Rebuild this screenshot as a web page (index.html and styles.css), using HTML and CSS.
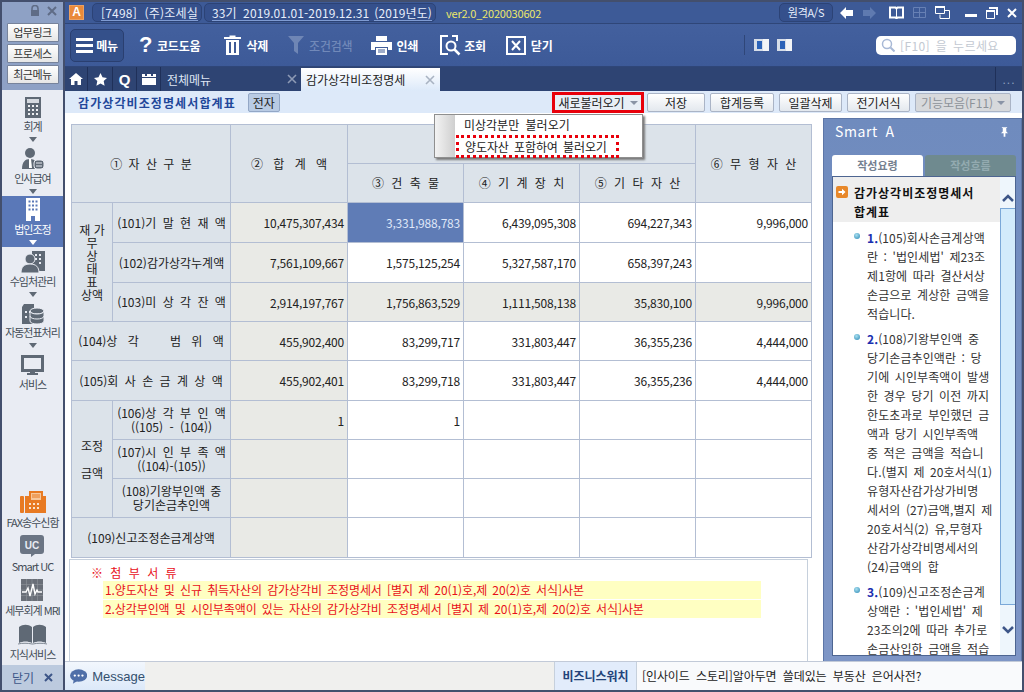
FILE: index.html
```html
<!DOCTYPE html>
<html lang="ko">
<head>
<meta charset="utf-8">
<title>감가상각비조정명세서합계표</title>
<link rel="stylesheet" href="styles.css">
</head>
<body>
<div class="window">
  <aside class="side">
    <div class="side-top">
      <div class="side-ctrl">
        <svg width="10" height="11" viewBox="0 0 10 11"><path d="M2 5V3.5a3 3 0 0 1 6 0V5" fill="none" stroke="#5f6c86" stroke-width="1.6"/><rect x="1" y="5" width="8" height="6" fill="#5f6c86"/></svg>
        <svg width="10" height="10" viewBox="0 0 10 10"><path d="M1 1l8 8M9 1l-8 8" stroke="#5f6c86" stroke-width="2"/></svg>
      </div>
      <button class="side-btn">업무링크</button>
      <button class="side-btn">프로세스</button>
      <button class="side-btn">최근메뉴</button>
    </div>
    <nav class="side-nav">
      <div class="nav-item">
        <svg class="nav-ico" width="16" height="21" viewBox="0 0 16 21"><rect width="16" height="21" fill="#5f6975"/><rect x="2" y="2" width="12" height="4" fill="#d5d9df"/><path d="M3 8h2v2H3zM7 8h2v2H7zM11 8h2v2h-2zM3 12h2v2H3zM7 12h2v2H7zM11 12h2v2h-2zM3 16h2v2H3zM7 16h2v2H7zM11 16h2v2h-2z" fill="#eef0f3"/></svg>
        <span class="nav-label">회계</span><i class="nav-arrow"></i>
      </div>
      <div class="nav-item">
        <svg class="nav-ico" width="24" height="22" viewBox="0 0 24 22"><circle cx="9" cy="5" r="5" fill="#5f6975"/><path d="M1 21c0-7 3-10 8-10s7 3 7 10z" fill="#5f6975"/><path d="M8 11h2l1 9H8z" fill="#fff"/><rect x="13" y="12" width="10" height="9" rx="3" fill="#5f6975" stroke="#e9ecf3"/><path d="M15 15h6M15 18h6" stroke="#e9ecf3"/></svg>
        <span class="nav-label">인사급여</span><i class="nav-arrow"></i>
      </div>
      <div class="nav-item nav-on">
        <svg class="nav-ico" width="16" height="23" viewBox="0 0 16 23"><path d="M1 0h14v23h-5v-5H6v5H1z" fill="#fff"/><path d="M3.500 2.500h2v2h-2zM7 2.500h2v2H7zM10.500 2.500h2v2h-2zM3.500 6.500h2v2h-2zM7 6.500h2v2H7zM10.500 6.500h2v2h-2zM3.500 10.500h2v2h-2zM7 10.500h2v2H7zM10.500 10.500h2v2h-2z" fill="#5a78b8"/></svg>
        <span class="nav-label">법인조정</span><i class="nav-arrow"></i>
      </div>
      <div class="nav-item">
        <svg class="nav-ico" width="24" height="22" viewBox="0 0 24 22"><path d="M11 0h13v20H11z" fill="#5f6975"/><path d="M14 3h2v2h-2zM18 3h2v2h-2zM14 7h2v2h-2zM18 7h2v2h-2zM18 11h2v2h-2z" fill="#e9ecf3"/><circle cx="9" cy="8" r="5" fill="#5f6975" stroke="#e9ecf3"/><path d="M0 22c0-6 3-9 9-9s9 3 9 9z" fill="#5f6975" stroke="#e9ecf3"/></svg>
        <span class="nav-label">수임처관리</span><i class="nav-arrow"></i>
      </div>
      <div class="nav-item">
        <svg class="nav-ico" width="24" height="20" viewBox="0 0 24 20"><path d="M1 3l2-3h10v20H1z" fill="#5f6975"/><path d="M4 7h2v2H4zM8 7h2v2H8zM4 12h2v2H4z" fill="#e9ecf3"/><ellipse cx="16" cy="7" rx="7" ry="3" fill="#5f6975" stroke="#e9ecf3"/><path d="M9 7v10c0 4 14 4 14 0V7c0 4-14 4-14 0z" fill="#5f6975" stroke="#e9ecf3"/><path d="M9 12c0 4 14 4 14 0" fill="none" stroke="#e9ecf3"/></svg>
        <span class="nav-label">자동전표처리</span><i class="nav-arrow"></i>
      </div>
      <div class="nav-item">
        <svg class="nav-ico" width="23" height="21" viewBox="0 0 23 21"><rect x="1.500" y="1.500" width="20" height="14" fill="#e9ecf3" stroke="#5f6975" stroke-width="3"/><path d="M9 16h5v2h3v2H6v-2h3z" fill="#5f6975"/></svg>
        <span class="nav-label">서비스</span>
      </div>
    </nav>
    <div class="side-tools">
      <div class="tool">
        <svg width="26" height="22" viewBox="0 0 26 22"><rect y="5" width="4" height="17" rx="1" fill="#e87a22"/><path d="M5 5h4V0h14v5h3v17H5z" fill="#e87a22"/><path d="M11 2h10v7H11z" fill="#f7c79a"/><path d="M12 4h8M12 6h8" stroke="#e87a22"/><path d="M9 12h2v2H9zM13 12h2v2h-2zM17 12h2v2h-2zM9 16h2v2H9zM13 16h2v2h-2zM17 16h2v2h-2z" fill="#fbe3cd"/></svg>
        <span class="tool-label">FAX송수신함</span>
      </div>
      <div class="tool">
        <svg width="24" height="22" viewBox="0 0 24 22"><path d="M3 0h18a3 3 0 0 1 3 3v13a3 3 0 0 1-3 3h-6l-4 3v-3H3a3 3 0 0 1-3-3V3a3 3 0 0 1 3-3z" fill="#6b7584"/><text x="12" y="13.500" class="uc-text">UC</text></svg>
        <span class="tool-label">Smart UC</span>
      </div>
      <div class="tool">
        <svg width="22" height="22" viewBox="0 0 22 22"><rect width="22" height="22" fill="#6a6f78"/><path d="M0 5.500h22M0 11h22M0 16.500h22M5.500 0v22M11 0v22M16.500 0v22" stroke="#8e939b" stroke-width=".6"/><path d="M1 13h4l2-4 2 8 3-12 2 10 2-4 1 2h4" fill="none" stroke="#fff" stroke-width="1.400"/></svg>
        <span class="tool-label">세무회계 MRI</span>
      </div>
      <div class="tool">
        <svg width="29" height="21" viewBox="0 0 29 21"><path d="M1 3c4-3 9-3 13 0v16c-4-2-9-2-13 0zM15 3c4-3 9-3 13 0v16c-4-2-9-2-13 0z" fill="#5f6975"/><path d="M0 20c4-1 10-1 14 0h1c4-1 10-1 14 0" fill="none" stroke="#7f8893"/></svg>
        <span class="tool-label">지식서비스</span>
      </div>
    </div>
    <div class="side-close"><span>닫기</span><svg width="9" height="9" viewBox="0 0 9 9"><path d="M1 1l7 7M8 1L1 8" stroke="#3d5688" stroke-width="2"/></svg></div>
  </aside>

  <main class="main">
    <header class="titlebar">
      <span class="logo">A</span>
      <span class="chip chip-a"><u>[7498] (주)조세실</u></span>
      <span class="chip chip-b"><u>33기 2019.01.01-2019.12.31</u> <u>(2019년도)</u></span>
      <span class="version">ver2.0_2020030602</span>
      <div class="title-right">
        <span class="chip chip-r">원격A/S</span>
        <svg width="14" height="12" viewBox="0 0 14 12"><path d="M0 6l6-6v3h7v6H6v3z" fill="#fff"/></svg>
        <svg class="after-back" width="13" height="12" viewBox="0 0 13 12"><path d="M13 6L7 0v3H0v6h7v3z" fill="#5f7ab0"/></svg>
        <svg class="after-fwd" width="15" height="13" viewBox="0 0 15 13"><path d="M1 1.500h5.500l1 1 1-1H14v10H8.500l-1 1-1-1H1z" fill="none" stroke="#fff" stroke-width="2"/><path d="M7.500 2v10" stroke="#fff"/></svg>
        <svg width="13" height="11" viewBox="0 0 13 11"><path d="M.5.500h12v10H.5zM.5 5.500h12M6.500.500v10" fill="none" stroke="#6780b4"/></svg>
        <svg width="15" height="13" viewBox="0 0 15 13"><path d="M.5.500h9v7h-9zM5 8.500v4h9.500v-8H10" fill="none" stroke="#fff"/><path d="M0 0h10v2H0z" fill="#fff"/></svg>
        <svg class="win-min" width="12" height="3" viewBox="0 0 12 3"><rect width="12" height="3" fill="#fff"/></svg>
        <svg width="12" height="12" viewBox="0 0 12 12"><path d="M3 0h9v8h-2V2H3z" fill="#fff"/><path d="M.5 3.500h8v8h-8z" fill="none" stroke="#fff"/><path d="M0 3h9v2H0z" fill="#fff"/></svg>
        <svg width="10" height="10" viewBox="0 0 10 10"><path d="M1 1l8 8M9 1L1 9" stroke="#fff" stroke-width="2"/></svg>
      </div>
    </header>

    <div class="toolbar">
      <button class="tb-menu">
        <svg width="17" height="15" viewBox="0 0 17 15"><path d="M0 0h17v3H0zM0 6h17v3H0zM0 12h17v3H0z" fill="#fff"/></svg>
        <b>메뉴</b>
      </button>
      <div class="tb-item tb-code"><span class="q">?</span><b>코드도움</b></div>
      <div class="tb-item tb-del">
        <svg width="17" height="20" viewBox="0 0 17 20"><path d="M5.500 2V.5h6V2H17v2H0V2z" fill="#fff"/><path d="M2 5h13v15H2z" fill="#fff"/><path d="M5 7h2v11H5zM10 7h2v11h-2z" fill="#3f5a95"/></svg>
        <b>삭제</b>
      </div>
      <div class="tb-item tb-off tb-find">
        <svg width="16" height="18" viewBox="0 0 16 18"><path d="M0 0h16l-6 7v11l-4-3V7z" fill="#6f86b5"/></svg>
        <b>조건검색</b>
      </div>
      <div class="tb-item tb-print">
        <svg width="21" height="19" viewBox="0 0 21 19"><path d="M5 0h11v5H5z" fill="#fff"/><path d="M0 6h21v8h-4v-3H4v3H0z" fill="#fff"/><path d="M5 12h11v7H5z" fill="#fff"/><path d="M7 14h7M7 16h7" stroke="#3f5a95"/></svg>
        <b>인쇄</b>
      </div>
      <div class="tb-item tb-view">
        <svg width="21" height="21" viewBox="0 0 21 21"><path d="M8 1H1v18h7M12 1h5v5" fill="none" stroke="#fff" stroke-width="2"/><circle cx="11" cy="11" r="4.500" fill="none" stroke="#fff" stroke-width="2"/><path d="M14.500 14.500l5 5" stroke="#fff" stroke-width="2.500"/></svg>
        <b>조회</b>
      </div>
      <div class="tb-item tb-close">
        <svg width="20" height="19" viewBox="0 0 20 19"><rect x="1" y="1" width="18" height="17" fill="none" stroke="#fff" stroke-width="2"/><path d="M6 5l8 9M14 5l-8 9" stroke="#fff" stroke-width="2"/></svg>
        <b>닫기</b>
      </div>
      <div class="tb-right">
        <i class="tb-sep"></i>
        <span class="mini"><i></i></span>
        <span class="mini"><i></i></span>
        <div class="search">
          <svg width="14" height="14" viewBox="0 0 14 14"><circle cx="6" cy="6" r="4.500" fill="none" stroke="#a8b9d6" stroke-width="1.500"/><path d="M9.500 9.500l4 4" stroke="#a8b9d6" stroke-width="2"/></svg>
          <span>[F10] 을 누르세요</span>
        </div>
      </div>
    </div>

    <div class="tabbar">
      <span class="tab-ico">
        <svg width="14" height="12" viewBox="0 0 14 12"><path d="M7 0l7 6h-2v6H8.500V8h-3v4H2V6H0z" fill="#fff"/></svg>
      </span>
      <span class="tab-ico tab-ico-b">
        <svg width="13" height="13" viewBox="0 0 13 13"><path d="M6.500 0l2 4.300 4.500.6-3.300 3.100.9 4.700-4.100-2.300-4.100 2.300.9-4.700L0 4.900l4.500-.6z" fill="#fff"/></svg>
      </span>
      <span class="tab-ico tab-ico-q">Q</span>
      <span class="tab-ico">
        <svg width="14" height="11" viewBox="0 0 14 11"><path d="M0 0h3v2h2V0h4v2h2V0h3v3H0zM0 4h14v7H0z" fill="#fff"/></svg>
      </span>
      <div class="tab tab-all"><span>전체메뉴</span><svg width="10" height="10" viewBox="0 0 10 10"><path d="M1 1l8 8M9 1L1 9" stroke="#8d9ab5" stroke-width="1.600"/></svg></div>
      <div class="tab tab-on"><span>감가상각비조정명세</span><svg width="10" height="10" viewBox="0 0 10 10"><path d="M1 1l8 8M9 1L1 9" stroke="#a9b3c2" stroke-width="1.600"/></svg></div>
      <div class="tab-more">...</div>
    </div>

    <div class="subbar">
      <h1 class="page-title">감가상각비조정명세서합계표</h1>
      <button class="btn btn-e">전자</button>
      <div class="sub-actions">
        <div class="load-wrap">
          <button class="btn btn-load">새로불러오기<i class="caret"></i></button>
          <div class="dropdown">
            <div class="dd-row">미상각분만 불러오기</div>
            <div class="dd-row dd-mark">양도자산 포함하여 불러오기</div>
          </div>
        </div>
        <button class="btn btn-save">저장</button>
        <button class="btn btn-sum">합계등록</button>
        <button class="btn btn-w">일괄삭제</button>
        <button class="btn btn-w">전기서식</button>
        <button class="btn btn-fn">기능모음(F11)<i class="caret"></i></button>
      </div>
    </div>

    <div class="body">
      <section class="work">
        <table class="grid">
          <colgroup><col class="c1"><col class="c2"><col class="c3"><col class="c4"><col class="c4"><col class="c4"><col class="c4"></colgroup>
          <tr class="h39">
            <th colspan="2" rowspan="2" class="wide">① 자 산 구 분</th>
            <th rowspan="2" class="widest">② 합 계 액</th>
            <th colspan="3"></th>
            <th rowspan="2" class="wider">⑥ 무 형 자 산</th>
          </tr>
          <tr class="h39">
            <th class="wider">③ 건 축 물</th>
            <th class="wider">④ 기 계 장 치</th>
            <th class="wider">⑤ 기 타 자 산</th>
          </tr>
          <tr class="h40">
            <th rowspan="3" class="stack">재 가<br>무<br>상<br>태<br>표<br>상액</th>
            <th class="wide">(101)기 말 현 재 액</th>
            <td class="num gray">10,475,307,434</td>
            <td class="num sel">3,331,988,783</td>
            <td class="num">6,439,095,308</td>
            <td class="num">694,227,343</td>
            <td class="num">9,996,000</td>
          </tr>
          <tr class="h40">
            <th>(102)감가상각누계액</th>
            <td class="num gray">7,561,109,667</td>
            <td class="num">1,575,125,254</td>
            <td class="num">5,327,587,170</td>
            <td class="num">658,397,243</td>
            <td class="num"></td>
          </tr>
          <tr class="h39">
            <th class="wide">(103)미 상 각 잔 액</th>
            <td class="num gray">2,914,197,767</td>
            <td class="num gray">1,756,863,529</td>
            <td class="num gray">1,111,508,138</td>
            <td class="num gray">35,830,100</td>
            <td class="num gray">9,996,000</td>
          </tr>
          <tr class="h39">
            <th colspan="2" class="widest">(104)상 각 &nbsp; 범 위 액</th>
            <td class="num gray">455,902,400</td>
            <td class="num">83,299,717</td>
            <td class="num">331,803,447</td>
            <td class="num">36,355,236</td>
            <td class="num">4,444,000</td>
          </tr>
          <tr class="h40">
            <th colspan="2" class="wide">(105)회 사 손 금 계 상 액</th>
            <td class="num gray">455,902,401</td>
            <td class="num">83,299,718</td>
            <td class="num">331,803,447</td>
            <td class="num">36,355,236</td>
            <td class="num">4,444,000</td>
          </tr>
          <tr class="h39">
            <th rowspan="3" class="adj">조정<br>금액</th>
            <th class="two wide">(106)상 각 부 인 액<br>((105) - (104))</th>
            <td class="num gray">1</td>
            <td class="num">1</td>
            <td class="num"></td><td class="num"></td><td class="num"></td>
          </tr>
          <tr class="h39">
            <th class="two wide">(107)시 인 부 족 액<br>((104)-(105))</th>
            <td class="num gray"></td>
            <td class="num"></td><td class="num"></td><td class="num"></td><td class="num"></td>
          </tr>
          <tr class="h39">
            <th class="two">(108)기왕부인액 중<br>당기손금추인액</th>
            <td class="num gray"></td>
            <td class="num"></td><td class="num"></td><td class="num"></td><td class="num"></td>
          </tr>
          <tr class="h40">
            <th colspan="2">(109)신고조정손금계상액</th>
            <td class="num gray"></td>
            <td class="num"></td><td class="num"></td><td class="num"></td><td class="num"></td>
          </tr>
        </table>
        <div class="memo">
          <p class="memo-head">※ 첨 부 서 류</p>
          <p class="memo-line">1.양도자산 및 신규 취득자산의 감가상각비 조정명세서 [별지 제 20(1)호,제 20(2)호 서식]사본</p>
          <p class="memo-line">2.상각부인액 및 시인부족액이 있는 자산의 감가상각비 조정명세서 [별지 제 20(1)호,제 20(2)호 서식]사본</p>
        </div>
      </section>

      <aside class="smart">
        <div class="smart-head"><span>Smart A</span>
          <svg width="7" height="10" viewBox="0 0 8 11"><path d="M1 0h6v1H6v4l2 2H5v4H3V7H0l2-2V1H1z" fill="#fff"/></svg>
        </div>
        <div class="smart-tabs">
          <span class="st st-on">작성요령</span>
          <span class="st st-off">작성흐름</span>
        </div>
        <div class="smart-box">
          <div class="smart-text">
            <div class="smart-title">
              <svg width="12" height="12" viewBox="0 0 12 12"><rect width="12" height="12" rx="2" fill="#e8882a"/><path d="M2.500 5h3.500V2.800L9.500 6 6 9.200V7H2.500z" fill="#fff"/></svg>
              <strong>감가상각비조정명세서<br>합계표</strong>
            </div>
            <div class="guide"><i class="dot"></i><p><b>1.</b>(105)회사손금계상액<br>란 : '법인세법' 제23조<br>제1항에 따라 결산서상<br>손금으로 계상한 금액을<br>적습니다.</p></div>
            <div class="guide"><i class="dot"></i><p><b>2.</b>(108)기왕부인액 중<br>당기손금추인액란 : 당<br>기에 시인부족액이 발생<br>한 경우 당기 이전 까지<br>한도초과로 부인했던 금<br>액과 당기 시인부족액<br>중 적은 금액을 적습니<br>다.(별지 제 20호서식(1)<br>유형자산감가상가비명<br>세서의 (27)금액,별지 제<br>20호서식(2) 유,무형자<br>산감가상각비명세서의<br>(24)금액의 합</p></div>
            <div class="guide"><i class="dot"></i><p><b>3.</b>(109)신고조정손금계<br>상액란 : '법인세법' 제<br>23조의2에 따라 추가로<br>손금산입한 금액을 적습</p></div>
          </div>
          <div class="scroll">
            <div class="sc-up"><svg width="12" height="8" viewBox="0 0 12 8"><path d="M1 7l5-5 5 5" fill="none" stroke="#3d5688" stroke-width="2.500"/></svg></div>
            <div class="sc-thumb"></div>
            <div class="sc-down"><svg width="12" height="8" viewBox="0 0 12 8"><path d="M1 1l5 5 5-5" fill="none" stroke="#3d5688" stroke-width="2.500"/></svg></div>
          </div>
        </div>
      </aside>
    </div>

    <footer class="status">
      <div class="msg">
        <svg width="18" height="15" viewBox="0 0 18 15"><ellipse cx="9" cy="6.500" rx="9" ry="6.500" fill="#4f6fa8"/><path d="M4 11l-1 4 5-3z" fill="#4f6fa8"/><circle cx="5" cy="6.500" r="1.200" fill="#fff"/><circle cx="9" cy="6.500" r="1.200" fill="#fff"/><circle cx="13" cy="6.500" r="1.200" fill="#fff"/></svg>
        <span>Message</span>
      </div>
      <div class="status-fill"></div>
      <div class="biz">비즈니스워치</div>
      <div class="news">[인사이드 스토리]알아두면 쓸데있는 부동산 은어사전?</div>
    </footer>
  </main>
</div>
</body>
</html>
```
FILE: styles.css
```css
* { box-sizing: border-box; }
html, body { margin: 0; height: 692px; overflow: hidden; }
body {
  font-family: "Noto Sans CJK KR", "Liberation Sans", sans-serif;
  font-size: 12px;
  word-spacing: 2px;
  color: #222;
}
button { font: inherit; word-spacing: inherit; padding: 0; margin: 0; }
p, h1 { margin: 0; }

.window {
  width: 1024px; height: 692px; padding: 2px;
  background: #434f6d;
  display: flex; gap: 2px;
}

/* sidebar */
.side { width: 61px; display: flex; flex-direction: column; background: #e9ecf3; }
.side-top { height: 88px; background: #8ea1c5; display: flex; flex-direction: column; align-items: center; }
.side-ctrl { align-self: flex-end; display: flex; gap: 7px; align-items: center; height: 21px; padding: 0 6px 4px 0; }
.side-btn {
  width: 52px; height: 19px; margin-bottom: 2px; font-size: 11px; letter-spacing: -.5px; line-height: 15px;
  background: linear-gradient(#fff, #e6e6e6); border: 1px solid #77839b; border-radius: 1px; color: #333;
}
.side-nav { padding-top: 3px; display: flex; flex-direction: column; }
.nav-item { height: 51.4px; display: flex; flex-direction: column; align-items: center; justify-content: flex-end; padding-bottom: 2px; color: #444c57; }
.nav-ico { flex: none; }
.nav-label { font-size: 11px; letter-spacing: -1px; line-height: 13px; margin-top: 2px; white-space: nowrap; }
.nav-arrow { width: 0; height: 0; border: 4.500px solid transparent; border-top: 5px solid #5f6975; border-bottom: 0; margin-top: 4px; }
.nav-item:last-child { justify-content: flex-start; padding-top: 5px; }
.nav-on { background: #5a78b8; color: #fff; }
.nav-on .nav-arrow { border-top-color: #fff; }
.side-tools { margin-top: auto; display: flex; flex-direction: column; align-items: center; color: #444c57; }
.tool { height: 44px; display: flex; flex-direction: column; align-items: center; justify-content: flex-end; }
.tool-label { font-size: 11px; letter-spacing: -1px; line-height: 13px; margin-top: 3px; white-space: nowrap; word-spacing: 0; }
.uc-text { font: bold 10px "Liberation Sans", sans-serif; fill: #e9ecf3; text-anchor: middle; }
.side-close { height: 25px; margin-top: 4px; background: #bccade; display: flex; align-items: center; justify-content: center; gap: 10px; color: #3d5688; }

/* main column */
.main { width: 957px; display: flex; flex-direction: column; }
.titlebar {
  height: 22px; flex: none; background: #3d5a97; border-bottom: 1px solid #2f4678;
  display: flex; align-items: center; padding-left: 4px;
}
.logo {
  width: 15px; height: 15px; background: #e98a3a; border: 1px solid #fff3; color: #fff;
  font: bold 12px/13px "Liberation Sans", sans-serif; text-align: center; margin-right: 8px; flex: none;
}
.chip {
  height: 19px; background: #35508c; border: 1px solid #2c4376; border-radius: 5px;
  color: #e7eefb; display: flex; align-items: center; gap: 5px; white-space: nowrap; line-height: 15px;
}
.chip u { text-decoration: none; border-bottom: 1px solid #7f9bd2; }
.chip-a { width: 110px; padding-left: 8px; margin-right: 2px; letter-spacing: .2px; word-spacing: 4px; }
.chip-b { width: 232px; padding-left: 7px; letter-spacing: .1px; word-spacing: 3px; }
.version { color: #ece86a; font-size: 11px; margin-left: 10px; letter-spacing: -.2px; }
.title-right { margin-left: auto; display: flex; align-items: center; padding-right: 5px; gap: 9px; }
.chip-r { width: 54px; justify-content: center; font-size: 11px; letter-spacing: -.3px; margin-right: -2px; }
.after-back { margin-right: 4px; }
.after-fwd { margin-left: 0; }
.win-min { align-self: flex-end; margin: 0 0 5px 6px; }

.toolbar {
  height: 43px; flex: none; background: linear-gradient(#43609e, #3d5a98); border-bottom: 1px solid #2f4678;
  display: flex; align-items: center; padding-left: 5px; color: #fff;
}
.tb-menu {
  width: 54px; height: 33px; background: #34508a; border: 1px solid #2a3f70; border-radius: 5px; color: #fff;
  display: flex; align-items: center; justify-content: center; gap: 3px; margin-right: 15px;
}
.toolbar b { font-weight: 700; word-spacing: 0; letter-spacing: -.2px; font-size: 12px; }
.tb-item { display: flex; align-items: center; gap: 5px; }
.q { font: bold 22px/22px "Liberation Sans", sans-serif; width: 13px; }
.tb-code { margin-right: 24px; }
.tb-del { margin-right: 20px; gap: 5px; }
.tb-find { margin-right: 19px; }
.tb-off { color: #7189b9; }
.tb-off b { font-weight: 500; }
.tb-print { margin-right: 22px; gap: 4px; }
.tb-view { margin-right: 20px; gap: 3px; }
.tb-right { margin-left: auto; display: flex; align-items: center; padding-right: 6px; gap: 8px; }
.tb-sep { width: 1px; height: 20px; background: #2f4678; margin-right: 1px; }
.mini { width: 15px; height: 12px; background: linear-gradient(90deg, #d6dde8 0, #d6dde8 60%, #f2f4f7 60%); display: flex; align-items: center; padding-left: 3px; }
.mini i { display: block; width: 5px; height: 8px; background: #2b62b8; }
.search {
  width: 140px; height: 19px; margin-left: 76px; background: #fff; border-radius: 5px;
  display: flex; align-items: center; gap: 5px; padding-left: 5px; color: #c3c9d2; white-space: nowrap; letter-spacing: .4px;
}

.tabbar { height: 24px; flex: none; background: #2e4473; display: flex; align-items: stretch; color: #dfe6f3; }
.tab-ico { width: 24px; border-right: 1px solid #1f3059; display: flex; align-items: center; justify-content: center; }
.tab-ico:first-child { width: 23px; }
.tab-ico-b { width: 25px; }
.tab-ico-q { font: bold 15px "Liberation Sans", sans-serif; color: #fff; }
.tab-all { width: 140px; }
.tab { display: flex; align-items: center; justify-content: space-between; padding: 0 4px 0 6px; }
.tab-on { width: 139px; margin-top: 1px; background: linear-gradient(#fff, #dce9f9); color: #222; padding-right: 5px; padding-left: 5px; }
.tab-more {
  margin-left: auto; width: 27px; border-left: 1px solid #1f3059; color: #8fa0c0; text-align: center;
  font: 12px/26px "Liberation Sans", sans-serif; letter-spacing: 1px;
}

.subbar { height: 22px; flex: none; background: #dde9f9; display: flex; align-items: center; padding-left: 13px; position: relative; z-index: 5; }
.page-title { font-size: 12px; font-weight: 700; color: #22479a; letter-spacing: 1.1px; margin-right: 12px; white-space: nowrap; }
.btn {
  height: 19px; background: linear-gradient(#fff, #e3e8ee); border: 1px solid #aab4c6; border-radius: 2px;
  color: #222; line-height: 15px; white-space: nowrap;
}
.btn-e { width: 32px; background: #b9cbe4; border-color: #93a7c6; }
.sub-actions { margin-left: auto; display: flex; align-items: center; gap: 5px; padding-right: 11px; }
.load-wrap { position: relative; margin-right: -2px; }
.btn-load {
  width: 92px; height: 21px; border: 3px solid #e8000b; border-radius: 0; background: #e8eef6;
  display: flex; align-items: center; justify-content: center; gap: 5px;
}
.caret { width: 0; height: 0; border: 4px solid transparent; border-top: 4px solid #8a94a6; border-bottom: 0; margin-top: 1px; }
.btn-save { width: 58px; }
.btn-w { width: 63px; }
.btn-sum { width: 64px; }
.btn-fn { width: 96px; background: #d7d9dc; color: #8d9299; display: flex; align-items: center; justify-content: center; gap: 4px; }
.dropdown {
  position: absolute; right: 1px; top: 22px; width: 209px; height: 44px; background: #fff;
  border: 1px solid #8f8f8f; box-shadow: 2px 2px 2px #7a7a7a; padding-left: 21px;
  background-image: linear-gradient(90deg, #f3f3f3, #cfcfcf); background-size: 20px 100%; background-repeat: no-repeat;
}
.dd-row { height: 20px; line-height: 20px; padding-left: 8px; white-space: nowrap; word-spacing: 3px; }
.dd-mark { height: 23px; line-height: 18px; border: 3px dotted #e8000b; width: 163px; padding-left: 6px; margin-left: 0; word-spacing: 2px; letter-spacing: -.1px; }

.body { flex: 1; display: flex; min-height: 0; background: #fff; }
.work { width: 758px; padding: 11px 0 0 6px; display: flex; flex-direction: column; }
.grid { border-collapse: collapse; table-layout: fixed; width: 740px; }
.c1 { width: 41px; } .c2 { width: 118px; } .c3 { width: 117px; } .c4 { width: 116px; }
.h39 { height: 39px; } .h40 { height: 40px; }
.grid th, .grid td { border: 1px solid #b3bed3; padding: 0; font-weight: 400; overflow: hidden; white-space: nowrap; }
.grid th { background: #dce3ea; text-align: center; line-height: 14px; }
.wide { word-spacing: 3px; }
.wider { word-spacing: 4px; }
.widest { word-spacing: 7px; }
.stack { line-height: 13px; font-size: 12px; word-spacing: 0; }
.grid th.stack { line-height: 13px; }
.grid th.adj { line-height: 27px; }
.num { text-align: right; letter-spacing: -.2px; word-spacing: 0; background: #fff; }
.grid td.num { padding-right: 3px; }
.gray { background: #e9eae6; }
.sel { background: #5f7cb6; color: #dfe7f8; }

.memo {
  flex: 1; margin: 1px 0 0 -2px; width: 739px; padding: 6px 0 0 21px;
  border: 1px solid #c6d0dc; border-bottom: 0; color: #e8101a;
}
.memo-head { line-height: 14px; word-spacing: 4px; margin-bottom: 1px; }
.memo-line { margin: 0 0 1px 12px; width: 658px; height: 18px; line-height: 17px; background: #ffffc2; padding-left: 2px; white-space: nowrap; word-spacing: 2px; letter-spacing: -.1px; }

.smart { flex: 1; margin-top: 5px; background: linear-gradient(#6f8bbe, #7e96c6); border: 1px solid #5d76a7; border-bottom: 0; display: flex; flex-direction: column; padding: 0 5px 5px 8px; }
.smart-head { height: 36px; flex: none; display: flex; justify-content: space-between; align-items: flex-start; padding: 2px 8px 0 3px; color: #fff; font-size: 14px; letter-spacing: .6px; word-spacing: 3px; }
.smart-head svg { margin-top: 6px; }
.smart-tabs { height: 21px; flex: none; display: flex; gap: 2px; font-size: 11px; font-weight: 700; }
.st { width: 91px; text-align: center; line-height: 21px; border-radius: 3px 3px 0 0; }
.st-on { background: #fff; color: #74808f; }
.st-off { background: #6f8a8f; color: #93aab0; }
.smart-box { flex: 1; min-height: 0; background: #fff; border: 1px solid #4d6591; display: flex; }
.smart-text { flex: 1; overflow: hidden; min-width: 0; }
.smart-title { background: #eee; height: 45px; padding: 6px 0 0 3px; display: flex; gap: 6px; color: #111; line-height: 19px; }
.smart-title svg { flex: none; margin-top: 3px; }
.smart-title strong { letter-spacing: 1px; white-space: nowrap; }
.guide { display: flex; padding: 6px 0 0 21px; color: #333; line-height: 19px; white-space: nowrap; letter-spacing: .1px; }
.guide b { color: #1a2fb0; }
.dot { flex: none; width: 6px; height: 6px; margin: 5px 7px 0 0; border-radius: 50%; background: radial-gradient(circle at 40% 35%, #a9e0f0, #2a87b4); }
.scroll { width: 15px; flex: none; background: #eef6fc; display: flex; flex-direction: column; }
.sc-up { height: 31px; flex: none; display: flex; align-items: center; justify-content: center; padding-top: 10px; }
.sc-thumb { height: 397px; flex: none; background: #d2ebfb; border: 1px solid #7aa8d8; border-right: 0; }
.sc-down { flex: 1; display: flex; align-items: center; justify-content: center; }

.status { height: 29px; flex: none; background: #f0f0ee; border-top: 1px solid #c2cad8; display: flex; }
.msg { width: 80px; background: linear-gradient(#f2f7fd, #dce9f9); display: flex; align-items: center; gap: 5px; padding-left: 5px; color: #34506e; font-size: 13px; font-family: "Liberation Sans", sans-serif; }
.status-fill { flex: 1; }
.biz { width: 83px; background: #e2ecfb; color: #23437a; font-weight: 700; text-align: center; line-height: 27px; border-left: 1px solid #c6d0dc; border-right: 1px solid #c6d0dc; word-spacing: 0; }
.news { width: 385px; background: #f9fafc; padding-left: 5px; line-height: 27px; white-space: nowrap; color: #222; word-spacing: 3px; letter-spacing: -.1px; }
```
